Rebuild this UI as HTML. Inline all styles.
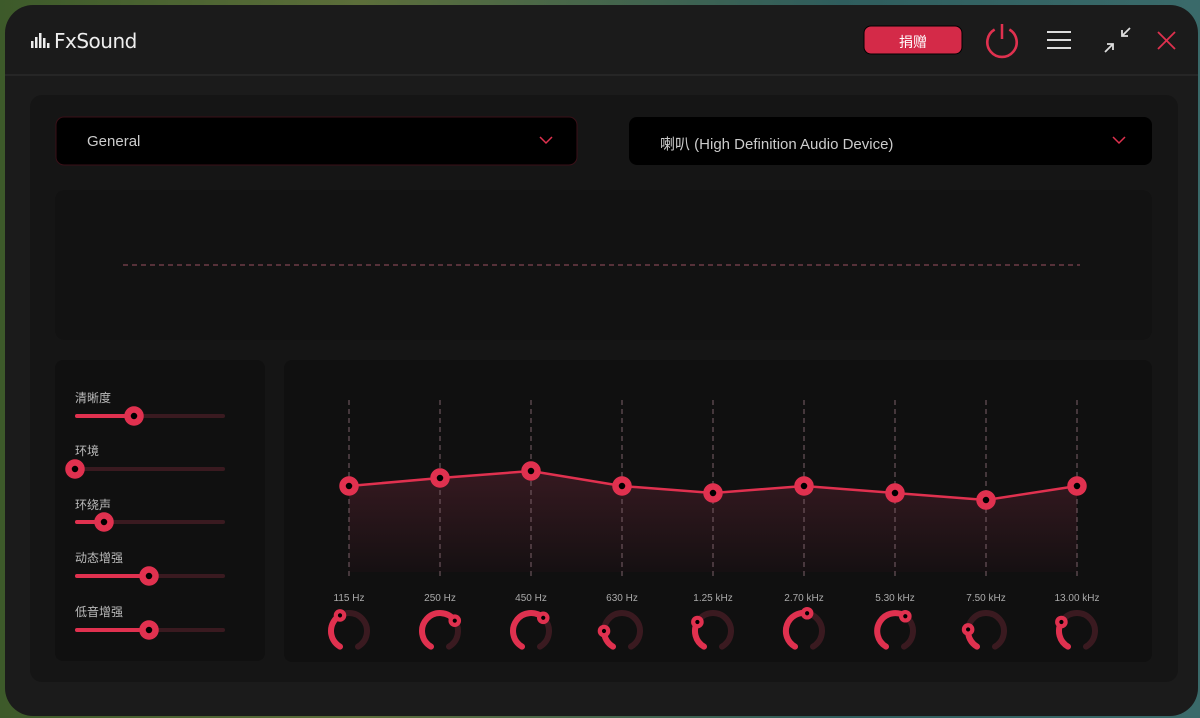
<!DOCTYPE html>
<html><head><meta charset="utf-8">
<style>
*{margin:0;padding:0;box-sizing:border-box}
body{width:1200px;height:718px;overflow:hidden;background:linear-gradient(90deg,#3d5a2a,#5c6e3a 30%,#2f5d5d 70%,#3a6a6a);font-family:"Liberation Sans","Noto Sans CJK SC",sans-serif;position:relative}
.win{position:absolute;left:5px;top:5px;width:1193px;height:711px;background:#1b1b1b;border-radius:28px;overflow:hidden}
.t{position:absolute;color:#bbb;white-space:nowrap}
</style></head><body>
<div class="win"></div>
<svg style="position:absolute;left:0;top:0" width="1200" height="718">
<defs><linearGradient id="g" x1="0" y1="0" x2="0" y2="1"><stop offset="0" stop-color="#3a1a22"/><stop offset="1" stop-color="#161012"/></linearGradient></defs>
<line x1="5" y1="75" x2="1198" y2="75" stroke="#262626" stroke-width="2"/>
<g fill="#eee"><rect x="31" y="41" width="2.5" height="7"/><rect x="35" y="37" width="2.5" height="11"/><rect x="39" y="33" width="2.5" height="15"/><rect x="43" y="38" width="2.5" height="10"/><rect x="47" y="43" width="2.5" height="5"/></g>
<rect x="864" y="26" width="98" height="28" rx="7" fill="#d42a48" stroke="#000" stroke-width="1"/>
<path d="M995 30 A14 14 0 1 0 1009 30" fill="none" stroke="#e0314f" stroke-width="2.5" transform="translate(1002,40) scale(1.05) translate(-1002,-40)"/>
<line x1="1002" y1="24" x2="1002" y2="39" stroke="#e0314f" stroke-width="2.5"/>
<g stroke="#ddd" stroke-width="2"><line x1="1047" y1="32" x2="1071" y2="32"/><line x1="1047" y1="40" x2="1071" y2="40"/><line x1="1047" y1="48" x2="1071" y2="48"/></g>
<g stroke="#ddd" stroke-width="1.8" fill="none"><line x1="1105" y1="52" x2="1113" y2="44"/><path d="M1107 44 H1113 V50"/><line x1="1130" y1="28" x2="1122" y2="36"/><path d="M1122 30 V36 H1128"/></g>
<g stroke="#e0314f" stroke-width="1.8"><line x1="1158" y1="32" x2="1175" y2="49"/><line x1="1175" y1="32" x2="1158" y2="49"/></g>
<rect x="30" y="95" width="1148" height="587" rx="12" fill="#151515"/>
<rect x="56" y="117" width="521" height="48" rx="8" fill="#000" stroke="#3a1018"/>
<rect x="629" y="117" width="523" height="48" rx="8" fill="#000"/>
<path d="M540 137 l6 6 l6 -6" fill="none" stroke="#e0314f" stroke-width="1.5"/>
<path d="M1113 137 l6 6 l6 -6" fill="none" stroke="#e0314f" stroke-width="1.5"/>
<rect x="55" y="190" width="1097" height="150" rx="10" fill="#121212"/>
<line x1="123" y1="265" x2="1080" y2="265" stroke="#9a5060" stroke-dasharray="5,4"/>
<rect x="55" y="360" width="210" height="301" rx="8" fill="#101010"/>
<rect x="284" y="360" width="868" height="302" rx="8" fill="#101010"/>
<g stroke-width="4" stroke-linecap="round">
<line x1="77" y1="416" x2="223" y2="416" stroke="#3a1a20"/><line x1="77" y1="416" x2="134" y2="416" stroke="#e0314f"/>
<line x1="77" y1="469" x2="223" y2="469" stroke="#3a1a20"/>
<line x1="77" y1="522" x2="223" y2="522" stroke="#3a1a20"/><line x1="77" y1="522" x2="104" y2="522" stroke="#e0314f"/>
<line x1="77" y1="576" x2="223" y2="576" stroke="#3a1a20"/><line x1="77" y1="576" x2="149" y2="576" stroke="#e0314f"/>
<line x1="77" y1="630" x2="223" y2="630" stroke="#3a1a20"/><line x1="77" y1="630" x2="149" y2="630" stroke="#e0314f"/>
</g>
<g fill="#000" stroke="#e0314f" stroke-width="6.5">
<circle cx="134" cy="416" r="6.5"/><circle cx="75" cy="469" r="6.5"/><circle cx="104" cy="522" r="6.5"/><circle cx="149" cy="576" r="6.5"/><circle cx="149" cy="630" r="6.5"/>
</g>
<polygon points="349,486 440,478 531,471 622,486 713,493 804,486 895,493 986,500 1077,486 1077,572 349,572" fill="url(#g)" opacity="0.9"/>
<g stroke="#7a6068" stroke-dasharray="5,4">
<line x1="349" y1="400" x2="349" y2="576"/><line x1="440" y1="400" x2="440" y2="576"/><line x1="531" y1="400" x2="531" y2="576"/><line x1="622" y1="400" x2="622" y2="576"/><line x1="713" y1="400" x2="713" y2="576"/><line x1="804" y1="400" x2="804" y2="576"/><line x1="895" y1="400" x2="895" y2="576"/><line x1="986" y1="400" x2="986" y2="576"/><line x1="1077" y1="400" x2="1077" y2="576"/>
</g>
<polyline points="349,486 440,478 531,471 622,486 713,493 804,486 895,493 986,500 1077,486" fill="none" stroke="#e0314f" stroke-width="2.5"/>
<g fill="#000" stroke="#e0314f" stroke-width="6.5">
<circle cx="349" cy="486" r="6.5"/><circle cx="440" cy="478" r="6.5"/><circle cx="531" cy="471" r="6.5"/><circle cx="622" cy="486" r="6.5"/><circle cx="713" cy="493" r="6.5"/><circle cx="804" cy="486" r="6.5"/><circle cx="895" cy="493" r="6.5"/><circle cx="986" cy="500" r="6.5"/><circle cx="1077" cy="486" r="6.5"/>
</g>
<g fill="none" stroke-width="5" stroke-linecap="round">
<g transform="translate(349,631) scale(1.2)"><path d="M-7.5 13 A15 15 0 1 1 7.5 13" stroke="#3a1a20"/><path d="M-7.5 13 A15 15 0 0 1 -7.5 -13" stroke="#e0314f"/><circle cx="-7.5" cy="-13" r="3.5" fill="#000" stroke-width="3.5" stroke="#e0314f"/></g>
<g transform="translate(440,631) scale(1.2)"><path d="M-7.5 13 A15 15 0 1 1 7.5 13" stroke="#3a1a20"/><path d="M-7.5 13 A15 15 0 1 1 12.3 -8.6" stroke="#e0314f"/><circle cx="12.3" cy="-8.6" r="3.5" fill="#000" stroke-width="3.5" stroke="#e0314f"/></g>
<g transform="translate(531,631) scale(1.2)"><path d="M-7.5 13 A15 15 0 1 1 7.5 13" stroke="#3a1a20"/><path d="M-7.5 13 A15 15 0 1 1 10.2 -11" stroke="#e0314f"/><circle cx="10.2" cy="-11" r="3.5" fill="#000" stroke-width="3.5" stroke="#e0314f"/></g>
<g transform="translate(622,631) scale(1.2)"><path d="M-7.5 13 A15 15 0 1 1 7.5 13" stroke="#3a1a20"/><path d="M-7.5 13 A15 15 0 0 1 -15 0" stroke="#e0314f"/><circle cx="-15" cy="0" r="3.5" fill="#000" stroke-width="3.5" stroke="#e0314f"/></g>
<g transform="translate(713,631) scale(1.2)"><path d="M-7.5 13 A15 15 0 1 1 7.5 13" stroke="#3a1a20"/><path d="M-7.5 13 A15 15 0 0 1 -13 -7.5" stroke="#e0314f"/><circle cx="-13" cy="-7.5" r="3.5" fill="#000" stroke-width="3.5" stroke="#e0314f"/></g>
<g transform="translate(804,631) scale(1.2)"><path d="M-7.5 13 A15 15 0 1 1 7.5 13" stroke="#3a1a20"/><path d="M-7.5 13 A15 15 0 0 1 2.6 -14.8" stroke="#e0314f"/><circle cx="2.6" cy="-14.8" r="3.5" fill="#000" stroke-width="3.5" stroke="#e0314f"/></g>
<g transform="translate(895,631) scale(1.2)"><path d="M-7.5 13 A15 15 0 1 1 7.5 13" stroke="#3a1a20"/><path d="M-7.5 13 A15 15 0 1 1 8.6 -12.3" stroke="#e0314f"/><circle cx="8.6" cy="-12.3" r="3.5" fill="#000" stroke-width="3.5" stroke="#e0314f"/></g>
<g transform="translate(986,631) scale(1.2)"><path d="M-7.5 13 A15 15 0 1 1 7.5 13" stroke="#3a1a20"/><path d="M-7.5 13 A15 15 0 0 1 -14.9 -1.3" stroke="#e0314f"/><circle cx="-14.9" cy="-1.3" r="3.5" fill="#000" stroke-width="3.5" stroke="#e0314f"/></g>
<g transform="translate(1077,631) scale(1.2)"><path d="M-7.5 13 A15 15 0 1 1 7.5 13" stroke="#3a1a20"/><path d="M-7.5 13 A15 15 0 0 1 -13 -7.5" stroke="#e0314f"/><circle cx="-13" cy="-7.5" r="3.5" fill="#000" stroke-width="3.5" stroke="#e0314f"/></g>
</g>
</svg>
<div class="t" style="left:54px;top:29px;font-size:20px;color:#eee;font-family:'DejaVu Sans',sans-serif;letter-spacing:-0.5px">FxSound</div>
<div class="t" style="left:864px;top:32px;width:98px;text-align:center;font-size:14px;color:#fff">捐赠</div>
<div class="t" style="left:87px;top:133px;font-size:15px;color:#ccc">General</div>
<div class="t" style="left:660px;top:133px;font-size:15px;color:#ccc">喇叭 (High Definition Audio Device)</div>
<div class="t" style="left:75px;top:389px;font-size:12px">清晰度</div>
<div class="t" style="left:75px;top:442px;font-size:12px">环境</div>
<div class="t" style="left:75px;top:496px;font-size:12px">环绕声</div>
<div class="t" style="left:75px;top:549px;font-size:12px">动态增强</div>
<div class="t" style="left:75px;top:603px;font-size:12px">低音增强</div>
<div class="t" style="left:309px;top:593px;width:80px;text-align:center;font-size:10px;color:#aaa">115 Hz</div>
<div class="t" style="left:400px;top:593px;width:80px;text-align:center;font-size:10px;color:#aaa">250 Hz</div>
<div class="t" style="left:491px;top:593px;width:80px;text-align:center;font-size:10px;color:#aaa">450 Hz</div>
<div class="t" style="left:582px;top:593px;width:80px;text-align:center;font-size:10px;color:#aaa">630 Hz</div>
<div class="t" style="left:673px;top:593px;width:80px;text-align:center;font-size:10px;color:#aaa">1.25 kHz</div>
<div class="t" style="left:764px;top:593px;width:80px;text-align:center;font-size:10px;color:#aaa">2.70 kHz</div>
<div class="t" style="left:855px;top:593px;width:80px;text-align:center;font-size:10px;color:#aaa">5.30 kHz</div>
<div class="t" style="left:946px;top:593px;width:80px;text-align:center;font-size:10px;color:#aaa">7.50 kHz</div>
<div class="t" style="left:1037px;top:593px;width:80px;text-align:center;font-size:10px;color:#aaa">13.00 kHz</div>
</body></html>
